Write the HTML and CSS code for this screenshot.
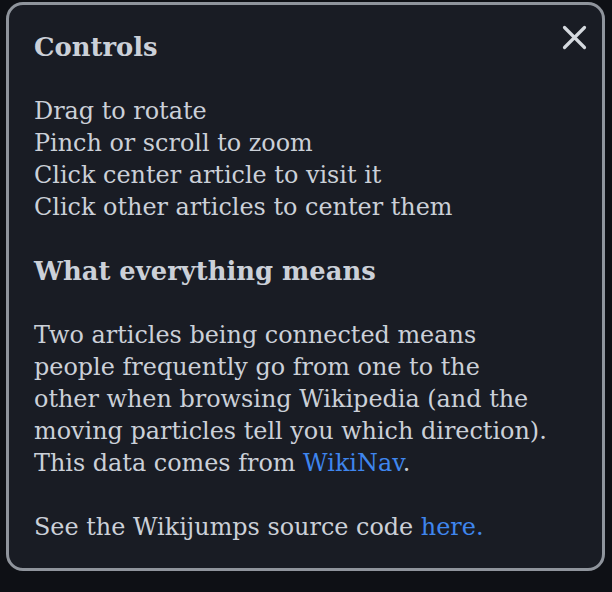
FILE: index.html
```html
<!DOCTYPE html>
<html lang="en">
<head>
<meta charset="utf-8">
<title>Wikijumps help</title>
<link rel="stylesheet" href="styles.css">
</head>
<body>
<div class="panel">
  <button class="close" aria-label="Close">
    <svg width="25" height="25" viewBox="0 0 25 25"><path d="M2.5 2.5 L22.5 22.5 M22.5 2.5 L2.5 22.5" stroke="currentColor" stroke-width="3.2" stroke-linecap="round" fill="none"/></svg>
  </button>
  <h2 class="title">Controls</h2>
  <p class="text">Drag to rotate<br>Pinch or scroll to zoom<br>Click center article to visit it<br>Click other articles to center them</p>
  <h2 class="title">What everything means</h2>
  <p class="text">Two articles being connected means<br>people frequently go from one to the<br>other when browsing Wikipedia (and the<br>moving particles tell you which direction).<br>This data comes from <a class="link" href="#">WikiNav</a>.</p>
  <p class="text">See the Wikijumps source code <a class="link" href="#">here.</a></p>
</div>
</body>
</html>
```
FILE: styles.css
```css
html, body {
  margin: 0;
  padding: 0;
  background: #0e1015;
  height: 100%;
}
body {
  font-family: "DejaVu Serif", "Liberation Serif", serif;
  color: #cbd0d8;
}
.panel {
  position: relative;
  box-sizing: border-box;
  width: 599px;
  margin: 2px 0 0 6px;
  padding: 26px 24px 25px 25px;
  background: #191c24;
  border: 3px solid #8f949c;
  border-radius: 17px;
}
.close {
  position: absolute;
  top: 20px;
  right: 15px;
  width: 25px;
  height: 25px;
  padding: 0;
  border: 0;
  background: none;
  color: #d5d9df;
  cursor: pointer;
}
.close svg { display: block; }
.title {
  margin: 0 0 32px 0;
  font-size: 25.8px;
  line-height: 32px;
  font-weight: bold;
}
.text {
  margin: 0 0 32px 0;
  font-size: 23.9px;
  line-height: 32px;
  white-space: nowrap;
}
.text:last-child { margin-bottom: 0; }
.link {
  color: #3f86ee;
  text-decoration: none;
}
```
